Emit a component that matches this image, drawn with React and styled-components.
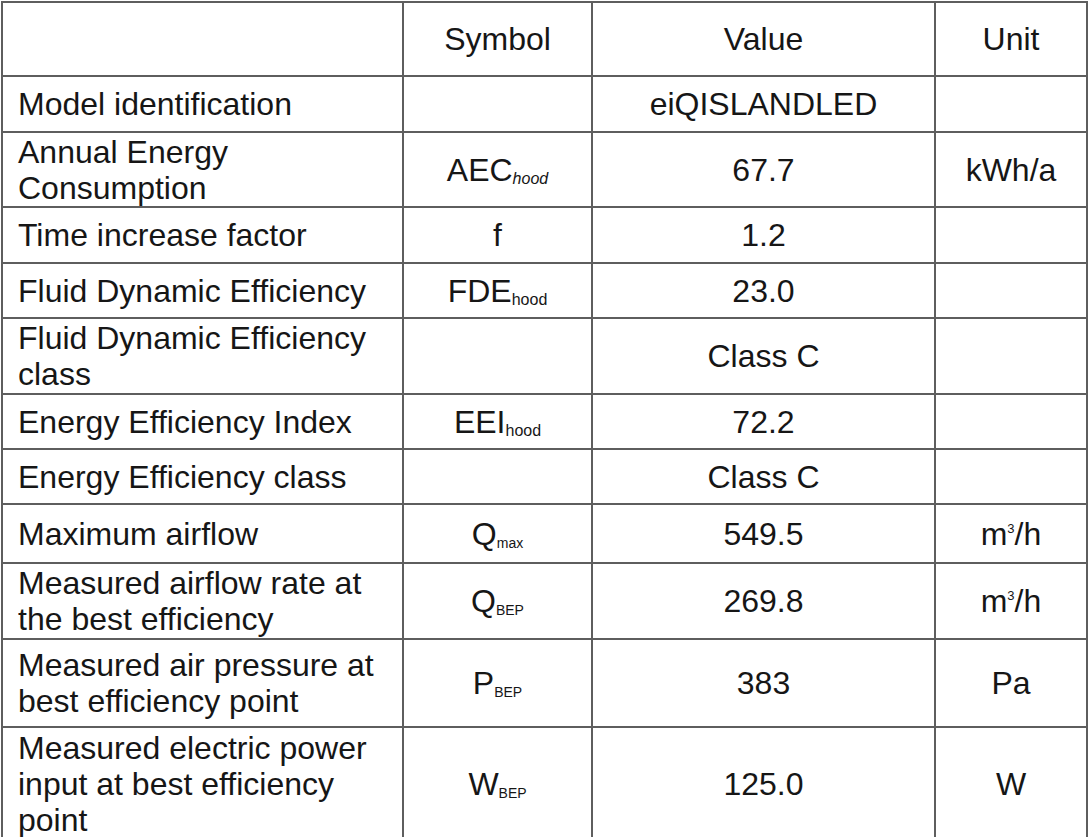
import React from 'react'
import styled, { createGlobalStyle } from 'styled-components'

const GlobalStyle = createGlobalStyle`
  html, body {
    margin: 0;
    padding: 0;
    background: #ffffff;
  }
  body {
    font-family: "Liberation Sans", Arial, sans-serif;
    color: #161616;
  }
`

const Sheet = styled.div`
  display: grid;
  grid-template-columns: 399px 187px 341px 150px;
  grid-template-rows: 72px 54px 73px 54px 53px 74px 53px 53px 57px 74px 86px 112px;
  gap: 2px;
  padding: 2px;
  margin: 1px 0 0 1px;
  width: max-content;
  background: #5e5e5e;
`

const Cell = styled.div`
  background: #ffffff;
  display: flex;
  align-items: center;
  justify-content: ${(p) => (p.$left ? 'flex-start' : 'center')};
  text-align: ${(p) => (p.$left ? 'left' : 'center')};
  padding: ${(p) => (p.$left ? '0 12px 0 15px' : '0 6px')};
  font-size: 32px;
  line-height: 36px;
  color: #161616;
  white-space: ${(p) => (p.$left ? 'normal' : 'nowrap')};
`

const Sub = styled.span`
  font-size: ${(p) => (p.$small ? '14px' : '16px')};
  line-height: 0;
  vertical-align: -3px;
  font-style: ${(p) => (p.$italic ? 'italic' : 'normal')};
`

const Sup = styled.span`
  font-size: 13px;
  line-height: 0;
  vertical-align: 12px;
`

const Symbol = ({ base, sub, italic, small }) => (
  <span>
    {base}
    {sub && (
      <Sub $italic={italic} $small={small}>
        {sub}
      </Sub>
    )}
  </span>
)

const CubicPerHour = () => (
  <span>
    m<Sup>3</Sup>/h
  </span>
)

const rows = [
  { label: '', symbol: 'Symbol', value: 'Value', unit: 'Unit' },
  { label: 'Model identification', symbol: '', value: 'eiQISLANDLED', unit: '' },
  { label: 'Annual Energy Consumption', symbol: <Symbol base="AEC" sub="hood" italic />, value: '67.7', unit: 'kWh/a' },
  { label: 'Time increase factor', symbol: 'f', value: '1.2', unit: '' },
  { label: 'Fluid Dynamic Efficiency', symbol: <Symbol base="FDE" sub="hood" />, value: '23.0', unit: '' },
  { label: 'Fluid Dynamic Efficiency class', symbol: '', value: 'Class C', unit: '' },
  { label: 'Energy Efficiency Index', symbol: <Symbol base="EEI" sub="hood" />, value: '72.2', unit: '' },
  { label: 'Energy Efficiency class', symbol: '', value: 'Class C', unit: '' },
  { label: 'Maximum airflow', symbol: <Symbol base="Q" sub="max" small />, value: '549.5', unit: <CubicPerHour /> },
  { label: 'Measured airflow rate at the best efficiency', symbol: <Symbol base="Q" sub="BEP" small />, value: '269.8', unit: <CubicPerHour /> },
  { label: 'Measured air pressure at best efficiency point', symbol: <Symbol base="P" sub="BEP" small />, value: '383', unit: 'Pa' },
  { label: 'Measured electric power input at best efficiency point', symbol: <Symbol base="W" sub="BEP" small />, value: '125.0', unit: 'W' },
]

export default function App() {
  return (
    <>
      <GlobalStyle />
      <Sheet>
        {rows.map((row, i) => (
          <React.Fragment key={`row_${i}`}>
            <Cell $left>{row.label}</Cell>
            <Cell>{row.symbol}</Cell>
            <Cell>{row.value}</Cell>
            <Cell>{row.unit}</Cell>
          </React.Fragment>
        ))}
      </Sheet>
    </>
  )
}
